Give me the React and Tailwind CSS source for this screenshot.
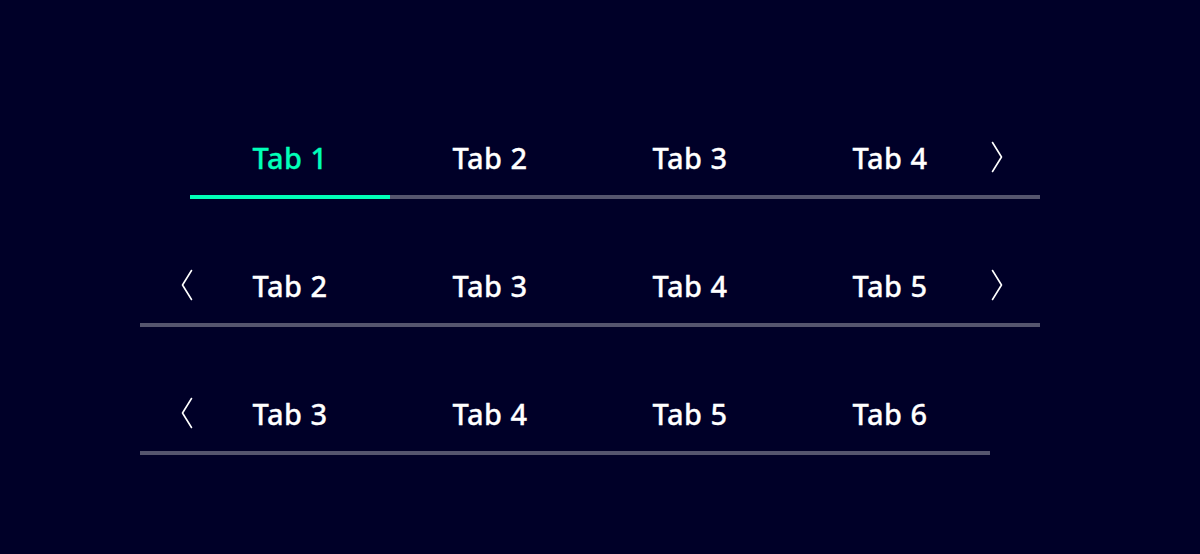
import React from 'react'

const Chevron = ({dir}) => (
  <svg className="shrink-0" width="12" height="32" viewBox="0 0 12 32" fill="none" stroke="#ffffff" strokeWidth="1.6" strokeLinecap="round" strokeLinejoin="round">
    {dir==='left'
      ? <path d="M10.5 1.5 L1.5 16 L10.5 30.5" />
      : <path d="M1.5 1.5 L10.5 16 L1.5 30.5" />}
  </svg>
)

function Tab({label, active}){
  return (
    <div className={'w-[200px] h-[68px] shrink-0 flex items-center justify-center pb-[11px] border-b-4 ' + (active ? 'border-[#00ffb9] text-[#00ffb9]' : 'border-[#55556e] text-white')}>
      <span className="text-[29px] font-medium tracking-[0.5px] [-webkit-text-stroke:0.3px_currentColor]">{label}</span>
    </div>
  )
}

function Arrow({dir}){
  return (
    <div className={'w-[50px] h-[68px] shrink-0 flex items-center pb-3 border-b-4 border-[#55556e] ' + (dir==='left' ? 'pl-[41px]' : 'pl-[1px]')}>
      <Chevron dir={dir} />
    </div>
  )
}

export default function App(){
  const rows = [
    {left:false, right:true, tabs:['Tab 1','Tab 2','Tab 3','Tab 4'], active:0, ml:'ml-[190px]'},
    {left:true, right:true, tabs:['Tab 2','Tab 3','Tab 4','Tab 5'], active:-1, ml:'ml-[140px]'},
    {left:true, right:false, tabs:['Tab 3','Tab 4','Tab 5','Tab 6'], active:-1, ml:'ml-[140px]'},
  ]
  return (
    <div className="w-full h-[554px] bg-[#000028] pt-[131px] flex flex-col gap-[60px]" style={{fontFamily:'"Noto Sans", sans-serif'}}>
      {rows.map((r,i)=>(
        <div key={i} className={'flex ' + r.ml}>
          {r.left && <Arrow dir="left" />}
          {r.tabs.map((t,j)=><Tab key={t} label={t} active={j===r.active} />)}
          {r.right && <Arrow dir="right" />}
        </div>
      ))}
    </div>
  )
}
